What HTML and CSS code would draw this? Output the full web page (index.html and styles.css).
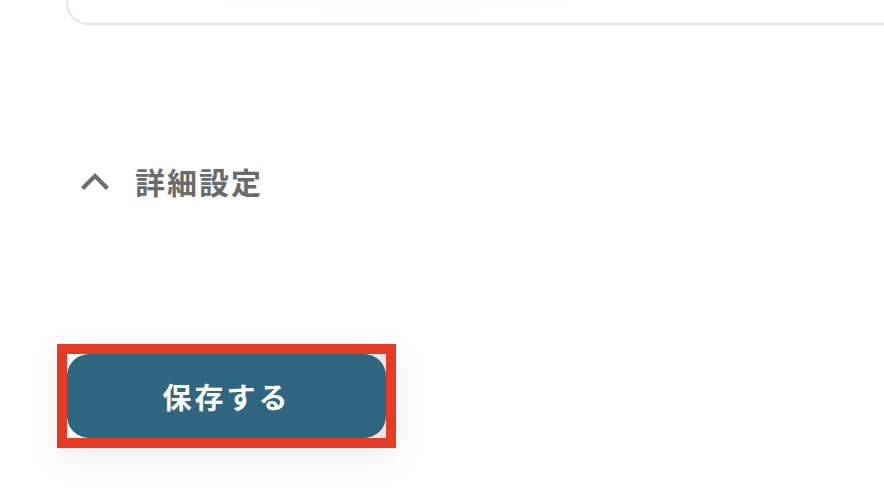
FILE: index.html
```html
<!DOCTYPE html>
<html lang="ja">
<head>
    <meta charset="UTF-8">
    <meta name="viewport" content="width=device-width, initial-scale=1.0">
    <title>詳細設定</title>
    <link rel="stylesheet" href="styles.css">
</head>
<body>
    <div class="panel"></div>

    <div class="advanced">
        <svg class="chevron" width="28" height="18" viewBox="0 0 28 18">
            <polyline points="3,15 14,4 25,15" fill="none" stroke="#6e6e6e" stroke-width="4.2" stroke-linecap="square"/>
        </svg>
        <span class="advanced-label">詳細設定</span>
    </div>

    <div class="save-area">
        <div class="highlight">
            <button class="save-btn">保存する</button>
        </div>
    </div>
</body>
</html>
```

FILE: styles.css
```css
body {
    margin: 0;
    background: #fff;
    font-family: "Noto Sans CJK JP", "Noto Sans", sans-serif;
    width: 884px;
    height: 504px;
    overflow: hidden;
}
.panel {
    height: 60px;
    margin: -39px -40px 0 66px;
    border: 2px solid #e4e4e4;
    border-radius: 22px;
    background: radial-gradient(ellipse 260px 40px at 330px 10px, #f3f3f3, #fff);
}
.advanced {
    display: flex;
    align-items: center;
    margin-top: 136px;
    padding-left: 81px;
    height: 40px;
}
.chevron {
    display: block;
}
.advanced-label {
    margin-left: 26px;
    font-size: 30px;
    font-weight: 700;
    letter-spacing: 2px;
    color: #6b6b6b;
}
.save-area {
    margin-top: 143px;
    padding-left: 57px;
}
.highlight {
    display: inline-block;
    border: 10px solid #e63c25;
    background: linear-gradient(135deg, #fff 30%, #e6e6e6 70%);
    box-shadow: 0 10px 30px rgba(0, 0, 0, 0.08);
}
.save-btn {
    display: block;
    width: 319px;
    height: 84px;
    border: none;
    border-radius: 22px;
    background: #2f6680;
    color: #fff;
    font-family: "Noto Sans CJK JP", sans-serif;
    font-size: 29px;
    font-weight: 700;
    letter-spacing: 3px;
    padding-left: 6px;
    cursor: pointer;
}
```
